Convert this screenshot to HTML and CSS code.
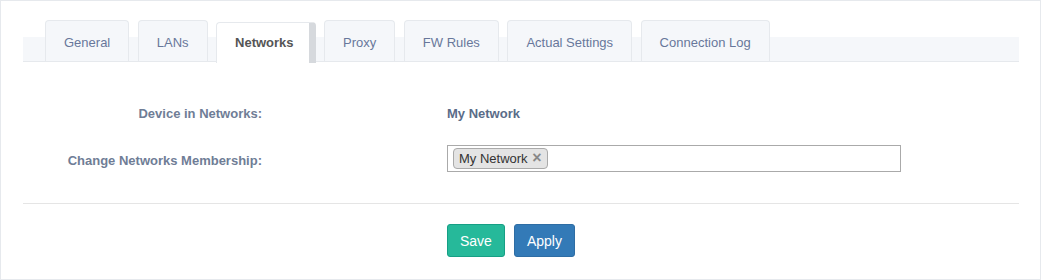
FILE: index.html
```html
<!DOCTYPE html>
<html>
<head>
<meta charset="utf-8">
<link rel="stylesheet" href="styles.css">
</head>
<body>
<div class="panel">
  <ul class="tabs">
    <li class="tab">General</li>
    <li class="tab">LANs</li>
    <li class="tab active">Networks</li>
    <li class="tab">Proxy</li>
    <li class="tab">FW Rules</li>
    <li class="tab">Actual Settings</li>
    <li class="tab">Connection Log</li>
  </ul>
  <form class="form">
    <div class="row row-first">
      <label class="label">Device in Networks:</label>
      <div class="value">My Network</div>
    </div>
    <div class="row row-second">
      <label class="label label-input">Change Networks Membership:</label>
      <div class="select">
        <span class="choice">My Network <span class="remove">×</span></span>
      </div>
    </div>
    <hr class="divider">
    <div class="actions">
      <button type="button" class="btn btn-success">Save</button>
      <button type="button" class="btn btn-primary">Apply</button>
    </div>
  </form>
</div>
</body>
</html>
```
FILE: styles.css
```css
* { box-sizing: border-box; }
html, body { margin: 0; padding: 0; background: #fff; }
body {
  font-family: "Liberation Sans", Arial, sans-serif;
  font-size: 13px;
  color: #73879c;
}
.panel {
  width: 1041px;
  height: 280px;
  border: 1px solid #e6e9ed;
  padding: 19px 21px 0 22px;
}
.tabs {
  list-style: none;
  margin: 0;
  padding: 0 0 0 22px;
  display: flex;
  align-items: flex-start;
  gap: 8.5px;
  height: 42px;
  border-bottom: 1px solid #e6e9ed;
  background: linear-gradient(to bottom, transparent 17px, #f5f7fa 17px);
}
.tab {
  height: 41px;
  padding: 12px 18px 0;
  line-height: 20px;
  background: #f5f7fa;
  border: 1px solid #e6e9ed;
  border-bottom: none;
  border-radius: 4px 4px 0 0;
  color: #68779b;
  white-space: nowrap;
}
.tab.active {
  margin-top: 2px;
  height: 41px;
  padding-top: 10px;
  background: #fff;
  color: #555;
  font-weight: bold;
  border-right: 7px solid #d6d9dd;
  padding-right: 15px;
}
.form { margin: 0; }
.row {
  display: grid;
  grid-template-columns: 239px 454px;
  column-gap: 185px;
}
.row-first { margin-top: 42px; line-height: 20px; }
.row-second { margin-top: 21px; }
.label {
  text-align: right;
  font-weight: bold;
  color: #6f7d96;
}
.label-input { padding-top: 6px; line-height: 20px; }
.value { font-weight: bold; color: #5a6c88; }
.select {
  height: 27px;
  border: 1px solid #aaa;
  background: #fff;
  padding: 2px 5px;
}
.choice {
  display: inline-block;
  height: 21px;
  line-height: 19px;
  padding: 0 5px;
  background: #e4e4e4;
  border: 1px solid #aaa;
  border-radius: 4px;
  color: #333;
  font-size: 13px;
}
.remove {
  color: #888;
  font-weight: bold;
  margin-left: 1px;
  font-size: 16px;
  line-height: 17px;
  vertical-align: top;
}
.divider {
  margin: 31px 0 0;
  border: 0;
  border-top: 1px solid #e5e5e5;
  height: 0;
}
.actions {
  margin-top: 20px;
  padding-left: 424px;
  display: flex;
  gap: 9px;
}
.btn {
  font-family: "Liberation Sans", Arial, sans-serif;
  font-size: 14px;
  line-height: 20px;
  padding: 6px 12px;
  border-radius: 3px;
  color: #fff;
  border: 1px solid transparent;
  height: 33px;
  cursor: pointer;
}
.btn-success { background: #26b99a; border-color: #169f85; }
.btn-primary { background: #337ab7; border-color: #2e6da4; }
```
